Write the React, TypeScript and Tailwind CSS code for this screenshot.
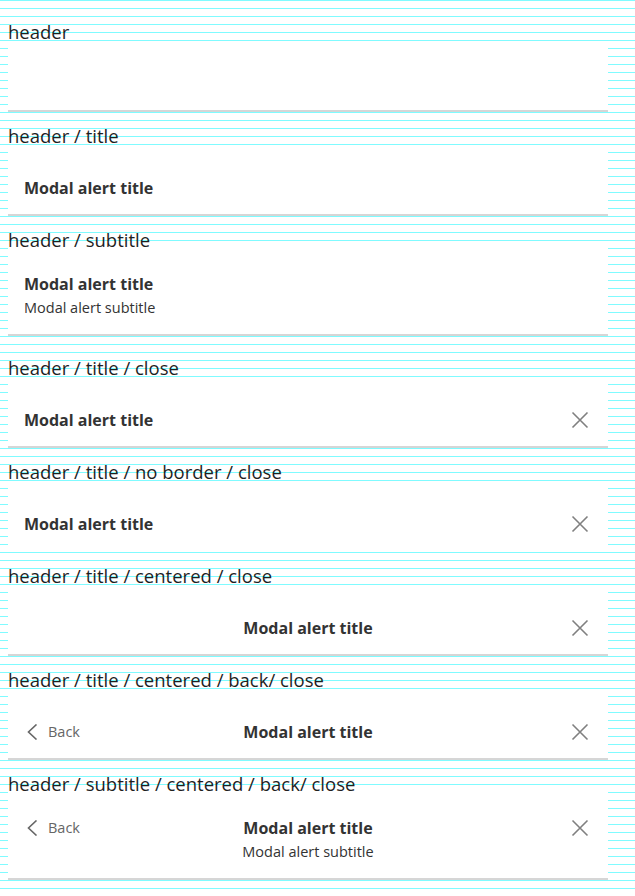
import { ReactNode } from 'react'

const CloseIcon = () => (
  <svg width="24" height="24" viewBox="0 0 24 24" fill="none" className="shrink-0">
    <path d="M4.5 4.5 19.5 19.5M19.5 4.5 4.5 19.5" stroke="#808080" strokeWidth="1.6" />
  </svg>
)

const BackButton = () => (
  <div className="flex items-center gap-2 text-[14.5px] leading-6 text-[#666]">
    <svg width="16" height="16" viewBox="0 0 16 16" fill="none" className="shrink-0">
      <path d="M12.5 0.5 4.5 8l8 7.5" stroke="#666" strokeWidth="1.6" />
    </svg>
    <span>Back</span>
  </div>
)

type HeaderProps = {
  title?: string
  subtitle?: string
  centered?: boolean
  back?: boolean
  close?: boolean
  border?: boolean
}

const ModalHeader = ({
  title,
  subtitle,
  centered = false,
  back = false,
  close = false,
  border = true,
}: HeaderProps) => {
  const boxClass = border
    ? 'ml-2 w-[600px] bg-white px-4 pt-6 pb-[14px] border-b-2 border-[#d6d6d6]'
    : 'ml-2 w-[600px] bg-white px-4 pt-6 pb-4'

  if (!title) {
    return <div className={boxClass + ' h-16'} />
  }

  const text = (
    <div className={centered ? 'flex flex-col items-center' : 'flex flex-col'}>
      <div className="text-[16px] font-bold leading-6 text-[#333]">{title}</div>
      {subtitle && <div className="text-[14.5px] leading-6 text-[#333]">{subtitle}</div>}
    </div>
  )

  if (centered) {
    return (
      <div className={boxClass}>
        <div className="grid grid-cols-[1fr_auto_1fr] items-start">
          <div className="flex">{back && <BackButton />}</div>
          {text}
          <div className="flex justify-end">{close && <CloseIcon />}</div>
        </div>
      </div>
    )
  }

  return (
    <div className={boxClass}>
      <div className="flex items-start justify-between">
        {text}
        {close && <CloseIcon />}
      </div>
    </div>
  )
}

// label rows sit on the 8px grid; rows above a subtitle box are 8px shorter,
// the row after one is 8px taller
const Label = ({ children, tight, extra }: { children: ReactNode; tight?: boolean; extra?: boolean }) => (
  <div
    className={
      (tight ? 'h-8 pt-3 ' : extra ? 'h-12 pt-5 ' : 'h-10 pt-3 ') +
      'px-2 text-[18.5px] leading-6 text-[#1f1f1f]'
    }
  >
    {children}
  </div>
)

export default function App() {
  return (
    <div
      className="min-h-screen w-full bg-white bg-[image:repeating-linear-gradient(to_bottom,#80fbff_0px,#80fbff_1px,transparent_1px,transparent_8px)] pt-2"
      style={{ fontFamily: '"Open Sans", "Noto Sans", sans-serif' }}
    >
      <Label>header</Label>
      <ModalHeader />

      <Label>header / title</Label>
      <ModalHeader title="Modal alert title" />

      <Label tight>header / subtitle</Label>
      <ModalHeader title="Modal alert title" subtitle="Modal alert subtitle" />

      <Label extra>header / title / close</Label>
      <ModalHeader title="Modal alert title" close />

      <Label>header / title / no border / close</Label>
      <ModalHeader title="Modal alert title" close border={false} />

      <Label>header / title / centered / close</Label>
      <ModalHeader title="Modal alert title" centered close />

      <Label>header / title / centered / back/ close</Label>
      <ModalHeader title="Modal alert title" centered back close />

      <Label tight>header / subtitle / centered / back/ close</Label>
      <ModalHeader
        title="Modal alert title"
        subtitle="Modal alert subtitle"
        centered
        back
        close
      />
    </div>
  )
}
